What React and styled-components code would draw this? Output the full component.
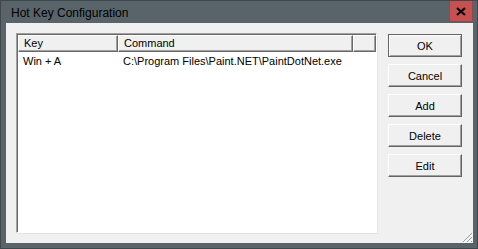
import React from 'react';
import styled, { createGlobalStyle } from 'styled-components';

const GlobalStyle = createGlobalStyle`
  html, body {
    margin: 0;
    padding: 0;
    background: #ffffff;
  }
  * {
    box-sizing: border-box;
  }
`;

const Window = styled.div`
  width: 478px;
  height: 249px;
  background: #59646a;
  border: 1px solid #3f474b;
  display: flex;
  flex-direction: column;
  font-family: 'Liberation Sans', Arial, sans-serif;
  color: #000;
`;

const TitleBar = styled.div`
  height: 22px;
  display: flex;
  align-items: center;
  justify-content: space-between;
  padding-left: 10px;
  padding-right: 4px;
  font-size: 12px;
`;

const Title = styled.span`
  color: #000;
  padding-top: 1px;
`;

const CloseButton = styled.div`
  width: 24px;
  height: 21px;
  align-self: flex-start;
  background: #c75050;
  display: flex;
  align-items: center;
  justify-content: center;
  border-left: 1px solid #8e4a4a;
  border-bottom: 1px solid #8e4a4a;
  border-right: 1px solid #8e4a4a;
`;

const Client = styled.div`
  position: relative;
  flex: 1;
  margin: 0 4px 5px 5px;
  background: #f0f0f0;
  display: flex;
  gap: 11px;
  padding: 10px 11px 10px 10px;
`;

const ListBox = styled.div`
  width: 361px;
  height: 200px;
  background: #fff;
  border-top: 1px solid #a0a0a0;
  border-left: 1px solid #a0a0a0;
  border-right: 1px solid #fff;
  border-bottom: 1px solid #fff;
  box-shadow: inset 1px 1px 0 #696969, 1px 1px 0 #e3e3e3;
  padding: 1px 0 0 1px;
  font-size: 11px;
`;

const Header = styled.div`
  display: grid;
  grid-template-columns: 100px 235px 1fr;
  height: 17px;
`;

const HeaderCell = styled.div`
  background: #f0f0f0;
  border-top: 1px solid #fff;
  border-left: 1px solid #fff;
  border-right: 1px solid #696969;
  border-bottom: 1px solid #696969;
  box-shadow: inset -1px -1px 0 #a0a0a0;
  padding: 1px 0 0 5px;
  line-height: 13px;
  white-space: nowrap;
`;

const Row = styled.div`
  display: grid;
  grid-template-columns: 100px 1fr;
  height: 16px;
  line-height: 15px;
  margin-top: 2px;
`;

const Cell = styled.div`
  padding-left: 5px;
  white-space: nowrap;
`;

const ButtonColumn = styled.div`
  display: flex;
  flex-direction: column;
  gap: 7px;
  padding-top: 1px;
`;

const Button = styled.div`
  width: 74px;
  height: ${(p) => (p.$default ? 23 : 23)}px;
  background: #f0f0f0;
  display: flex;
  align-items: center;
  justify-content: center;
  font-size: 11px;
  border-top: 1px solid ${(p) => (p.$default ? '#646464' : '#fff')};
  border-left: 1px solid ${(p) => (p.$default ? '#646464' : '#fff')};
  border-right: 1px solid #646464;
  border-bottom: 1px solid #646464;
  box-shadow: ${(p) =>
    p.$default
      ? 'inset 1px 1px 0 #fff, inset -1px -1px 0 #a0a0a0'
      : 'inset -1px -1px 0 #a0a0a0'};
`;

const Grip = styled.svg`
  position: absolute;
  right: 0;
  bottom: 0;
`;

export default function App() {
  return (
    <>
      <GlobalStyle />
      <Window>
        <TitleBar>
          <Title>Hot Key Configuration</Title>
          <CloseButton>
            <svg width="10" height="9" viewBox="0 0 10 9">
              <path d="M1 1 L9 8 M9 1 L1 8" stroke="#000" strokeWidth="2.2" />
            </svg>
          </CloseButton>
        </TitleBar>
        <Client>
          <ListBox>
            <Header>
              <HeaderCell>Key</HeaderCell>
              <HeaderCell>Command</HeaderCell>
              <HeaderCell />
            </Header>
            <Row>
              <Cell>Win + A</Cell>
              <Cell>C:\Program Files\Paint.NET\PaintDotNet.exe</Cell>
            </Row>
          </ListBox>
          <ButtonColumn>
            <Button $default>OK</Button>
            <Button>Cancel</Button>
            <Button>Add</Button>
            <Button>Delete</Button>
            <Button>Edit</Button>
          </ButtonColumn>
          <Grip width="12" height="12" viewBox="0 0 12 12">
            <path d="M11 2 L2 11 M11 6 L6 11 M11 10 L10 11" stroke="#a0a0a0" strokeWidth="1" />
            <path d="M12 3 L3 12 M12 7 L7 12" stroke="#fff" strokeWidth="1" />
          </Grip>
        </Client>
      </Window>
    </>
  );
}
